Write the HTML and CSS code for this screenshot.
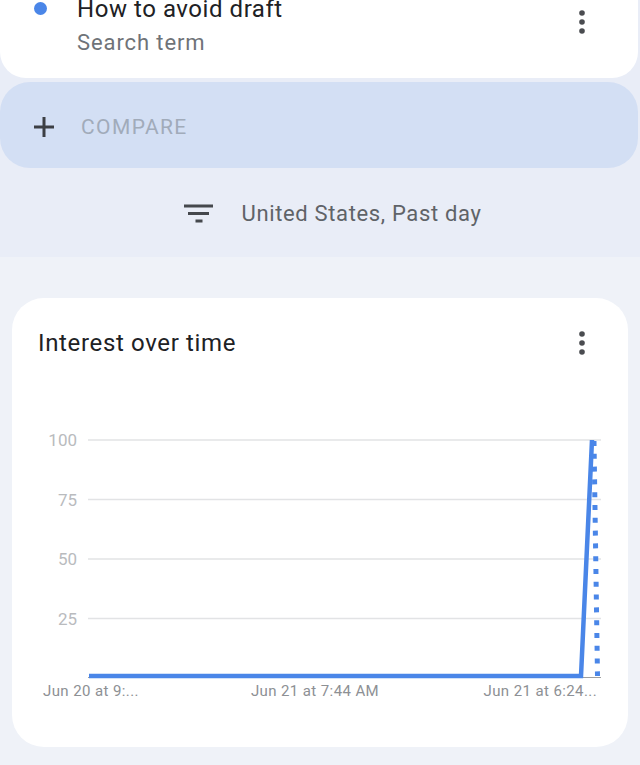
FILE: index.html
```html
<!DOCTYPE html>
<html lang="en">

<head>
  <meta charset="UTF-8" />
  <meta name="viewport" content="width=device-width, initial-scale=1.0" />
  <title>Trends - How to avoid draft</title>
  <link rel="stylesheet" href="styles.css">
</head>

<body>
  <div class="top">
    <div class="term-card">
      <span class="term-dot"></span>
      <div class="term-text">
        <div class="term-title">How to avoid draft</div>
        <div class="term-sub">Search term</div>
      </div>
      <svg class="kebab term-kebab" width="24" height="24" viewBox="0 0 24 24">
        <circle cx="12" cy="3" r="2.8" />
        <circle cx="12" cy="12" r="2.8" />
        <circle cx="12" cy="21" r="2.8" />
      </svg>
    </div>

    <div class="compare">
      <svg class="plus" width="22" height="22" viewBox="0 0 22 22">
        <path d="M11 1v20M1 11h20" />
      </svg>
      <span class="compare-label">COMPARE</span>
    </div>

    <div class="filter">
      <svg class="filter-icon" width="30" height="20" viewBox="0 0 30 20">
        <path d="M0 2h29M4 9.5h21M11.5 17h7" />
      </svg>
      <span class="filter-label">United States, Past day</span>
    </div>
  </div>

  <div class="bottom">
    <div class="card">
      <div class="card-head">
        <h2>Interest over time</h2>
        <svg class="kebab" width="24" height="24" viewBox="0 0 24 24">
          <circle cx="12" cy="3" r="2.8" />
          <circle cx="12" cy="12" r="2.8" />
          <circle cx="12" cy="21" r="2.8" />
        </svg>
      </div>

      <svg class="chart" width="616" height="290" viewBox="0 0 616 290">
        <g class="grid">
          <line x1="76" y1="20" x2="589" y2="20" />
          <line x1="76" y1="79.5" x2="589" y2="79.5" />
          <line x1="76" y1="139" x2="589" y2="139" />
          <line x1="76" y1="198.5" x2="589" y2="198.5" />
        </g>
        <line class="axis" x1="76" y1="257.5" x2="589" y2="257.5" />
        <g class="y-labels">
          <text x="65" y="26">100</text>
          <text x="65" y="85.5">75</text>
          <text x="65" y="145">50</text>
          <text x="65" y="204.5">25</text>
        </g>
        <g class="x-labels">
          <text x="31" y="276">Jun 20 at 9:...</text>
          <text x="303" y="276" text-anchor="middle">Jun 21 at 7:44 AM</text>
          <text x="585" y="276" text-anchor="end">Jun 21 at 6:24...</text>
        </g>
        <polyline class="series" points="77,256 569,256 580,20" />
        <line class="partial" x1="582" y1="21" x2="585.5" y2="256" />
      </svg>
    </div>
  </div>
</body>

</html>
```

FILE: styles.css
```css
body {
  font-family: Roboto, "Noto Sans", sans-serif;
  background: #eff2f8;
  margin: 0;
  padding: 0;
  width: 640px;
  height: 765px;
  overflow: hidden;
}

.top {
  background: #e9edf7;
}

/* search term card, scrolled partly out of view */
.term-card {
  display: flex;
  align-items: flex-start;
  background: white;
  height: 84px;
  margin-top: -6px;
  margin-right: 2px;
  padding: 1px 0 0 34px;
  box-sizing: border-box;
  border-radius: 0 0 26px 26px;
}

.term-dot {
  width: 13px;
  height: 13px;
  margin-top: 7px;
  border-radius: 50%;
  background: #4a86e8;
  flex-shrink: 0;
}

.term-text {
  margin-left: 30px;
}

.term-title {
  font-size: 24px;
  line-height: 28px;
  letter-spacing: 0.55px;
  color: #202124;
}

.term-sub {
  margin-top: 7px;
  font-size: 22px;
  line-height: 26px;
  letter-spacing: 0.9px;
  color: #6f7378;
}

.kebab {
  fill: #4a4c50;
  flex-shrink: 0;
}

.term-kebab {
  margin-left: auto;
  margin-right: 44px;
  margin-top: 15px;
}

.compare {
  display: flex;
  align-items: center;
  height: 86px;
  margin-top: 4px;
  margin-right: 2px;
  padding: 3px 0 0 33px;
  box-sizing: border-box;
  background: #d3dff4;
  border-radius: 30px;
}

.plus {
  stroke: #3c3f44;
  stroke-width: 3;
  fill: none;
}

.compare-label {
  margin-left: 26px;
  font-size: 21px;
  letter-spacing: 1.4px;
  color: #a1abba;
}

.filter {
  display: flex;
  align-items: center;
  justify-content: center;
  height: 89px;
  padding: 2px 0 0 26px;
  box-sizing: border-box;
}

.filter-icon {
  stroke: #45484d;
  stroke-width: 3;
  fill: none;
}

.filter-label {
  margin-left: 27px;
  font-size: 22px;
  letter-spacing: 0.65px;
  color: #5f6368;
}

.bottom {
  padding-top: 41px;
}

.card {
  background: white;
  margin: 0 12px;
  height: 449px;
  border-radius: 32px;
  overflow: hidden;
}

.card-head {
  display: flex;
  align-items: center;
  padding: 31px 34px 0 26px;
}

.card-head h2 {
  margin: 0;
  font-size: 24px;
  line-height: 28px;
  letter-spacing: 0.65px;
  font-weight: normal;
  color: #202124;
}

.card-head .kebab {
  margin-left: auto;
}

.chart {
  display: block;
  margin-top: 63px;
  font-family: Roboto, "Noto Sans", sans-serif;
}

.grid line {
  stroke: #e2e3e5;
  stroke-width: 1.5;
}

.axis {
  stroke: #9e9e9e;
  stroke-width: 1;
}

.y-labels text {
  font-size: 17px;
  fill: #b9bbbe;
  text-anchor: end;
}

.x-labels text {
  font-size: 15px;
  letter-spacing: 0.4px;
  fill: #8d9094;
}

.series {
  fill: none;
  stroke: #4a86e8;
  stroke-width: 4.5;
  stroke-linejoin: miter;
}

.partial {
  stroke: #4a86e8;
  stroke-width: 5;
  stroke-dasharray: 5 7.8;
}
```
